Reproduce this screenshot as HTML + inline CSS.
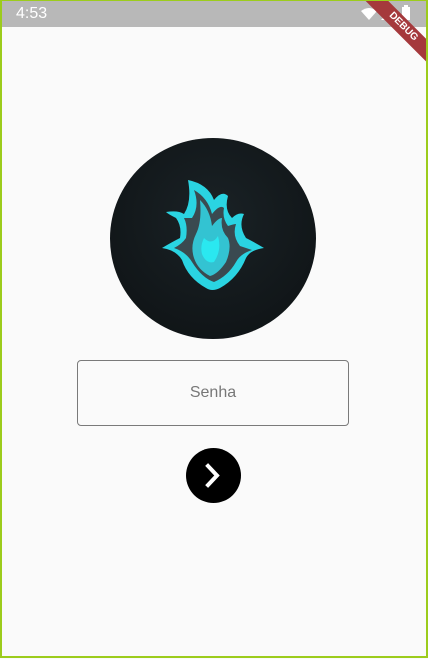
<!DOCTYPE html>
<html><head><meta charset="utf-8"><style>
html,body{margin:0;padding:0}
body{width:428px;height:659px;position:relative;overflow:hidden;background:#fafafa;font-family:"Liberation Sans",Roboto,sans-serif}
.frame{position:absolute;left:0;top:0;width:424px;height:655px;border:2px solid #9ccc1c;border-top-width:1px;z-index:5;pointer-events:none}
.status{position:absolute;left:0;top:0;width:428px;height:27px;background:#b8b8b8}
.time{position:absolute;left:16px;top:5px;color:#fff;font-size:16px}
.logo{position:absolute;left:110px;top:138px;width:206px;height:201px;border-radius:50%;background:radial-gradient(circle at 50% 40%,#1a2226,#0d1113)}
.field{position:absolute;left:77px;top:360px;width:270px;height:64px;border:1px solid #7a7a7a;border-radius:4px;text-align:center;line-height:64px;font-size:16px;color:#777}
.btn{position:absolute;left:186px;top:448px;width:55px;height:55px;border-radius:50%;background:#000}
.ribbon{position:absolute;right:-35px;top:19px;width:120px;height:16px;background:#a5393c;transform:rotate(45deg);color:#fff;font-size:10px;font-weight:bold;text-align:center;line-height:16px;z-index:4}
</style></head><body>
<div class="status"><span class="time">4:53</span>
<svg style="position:absolute;left:361px;top:8px" width="16" height="12" viewBox="0 0 16 12"><path d="M0 3 Q8 -3 16 3 L8 12 Z" fill="#fff"/></svg>
<svg style="position:absolute;left:381px;top:8px" width="12" height="12" viewBox="0 0 12 12"><path d="M0 12 L12 0 L12 12 Z" fill="#fff"/></svg>
<svg style="position:absolute;left:402px;top:5px" width="8" height="15" viewBox="0 0 8 15"><rect x="0" y="2" width="8" height="13" fill="#fff"/><rect x="2" y="0" width="4" height="2" fill="#fff"/></svg>
</div>
<div class="ribbon">DEBUG</div>
<div class="logo">
<svg width="206" height="201" viewBox="0 0 206 201">
<path d="M78 42 Q98 46 104 62 Q112 52 118 58 Q114 72 122 80 Q128 74 134 76 Q128 88 136 100 Q144 104 154 110 Q140 112 136 120 Q128 140 110 150 Q102 154 96 150 Q78 140 72 122 Q66 112 52 110 Q62 104 70 100 Q72 88 66 80 Q58 76 56 74 Q68 72 74 76 Q82 64 78 42 Z" fill="#2ad4e2"/>
<path d="M84 52 Q98 60 102 76 Q110 66 114 70 Q112 80 118 88 Q124 86 126 86 Q122 98 130 108 Q136 110 142 112 Q130 116 126 124 Q118 138 104 144 Q92 140 82 124 Q76 114 64 110 Q72 106 76 100 Q78 88 74 80 Q80 80 82 80 Q90 68 84 52 Z" fill="#3a4a50"/>
<path d="M90 62 Q100 72 102 88 Q108 80 112 80 Q110 92 118 100 Q122 110 116 124 Q108 136 100 138 Q88 132 84 120 Q80 108 86 96 Q92 84 90 62 Z" fill="#33c3d2"/>
<path d="M94 100 Q102 108 108 98 Q112 112 104 124 Q96 126 92 116 Q90 108 94 100 Z" fill="#2ae8f0"/>
</svg>
</div>
<div class="field">Senha</div>
<div class="btn"><svg width="55" height="55" viewBox="0 0 55 55"><path d="M22 18 L31 27.5 L22 37" stroke="#fff" stroke-width="4" fill="none" stroke-linecap="square"/></svg></div>
<div class="frame"></div>
</body></html>
